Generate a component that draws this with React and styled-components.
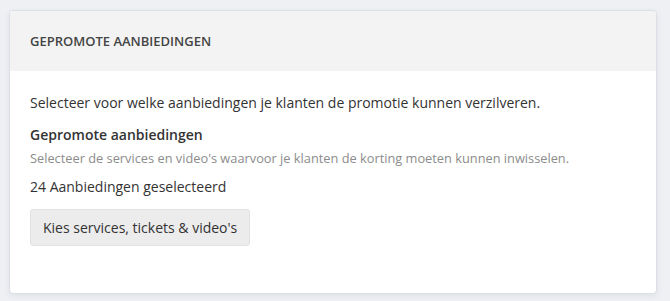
import React from 'react';
import styled, { createGlobalStyle } from 'styled-components';

const GlobalStyle = createGlobalStyle`
  html, body {
    margin: 0;
    background: #eef0f4;
    font-family: "Open Sans", "Liberation Sans", sans-serif;
    color: #333;
  }
`;

const Page = styled.div`
  padding: 10px 13px 9px 9px;
`;

const Card = styled.section`
  background: #fff;
  border: 1px solid #dcdfe3;
  border-radius: 4px;
  box-shadow: 0 2px 6px rgba(40, 50, 70, 0.08);
  overflow: hidden;
`;

const CardHeader = styled.header`
  background: #f3f3f3;
  height: 60px;
  display: flex;
  align-items: center;
  padding: 0 20px;
`;

const CardTitle = styled.h3`
  margin: 0;
  font-size: 13px;
  font-weight: 600;
  text-transform: uppercase;
  color: #444;
`;

const CardBody = styled.div`
  padding: 22px 20px 47px;
  display: flex;
  flex-direction: column;
  align-items: flex-start;
`;

const Text = styled.p`
  margin: 0;
  font-size: ${(p) => (p.$small ? '12.8px' : '14px')};
  font-weight: ${(p) => (p.$bold ? 600 : 400)};
  color: ${(p) => (p.$small ? '#8c8c8c' : '#333')};
  line-height: ${(p) => (p.$small ? '18px' : '20px')};
  margin-top: ${(p) => p.$gap || 0}px;
`;

const Button = styled.button`
  margin-top: 12px;
  height: 37px;
  padding: 0 12px;
  background: #ececec;
  border: 1px solid #e2e2e2;
  border-radius: 3px;
  font-family: inherit;
  font-size: 14px;
  color: #333;
  cursor: pointer;
`;

export default function App() {
  return (
    <>
      <GlobalStyle />
      <Page>
        <Card>
          <CardHeader>
            <CardTitle>Gepromote aanbiedingen</CardTitle>
          </CardHeader>
          <CardBody>
            <Text>Selecteer voor welke aanbiedingen je klanten de promotie kunnen verzilveren.</Text>
            <Text $bold $gap={12}>Gepromote aanbiedingen</Text>
            <Text $small $gap={4}>Selecteer de services en video's waarvoor je klanten de korting moeten kunnen inwisselen.</Text>
            <Text $gap={10}>24 Aanbiedingen geselecteerd</Text>
            <Button>Kies services, tickets &amp; video's</Button>
          </CardBody>
        </Card>
      </Page>
    </>
  );
}
